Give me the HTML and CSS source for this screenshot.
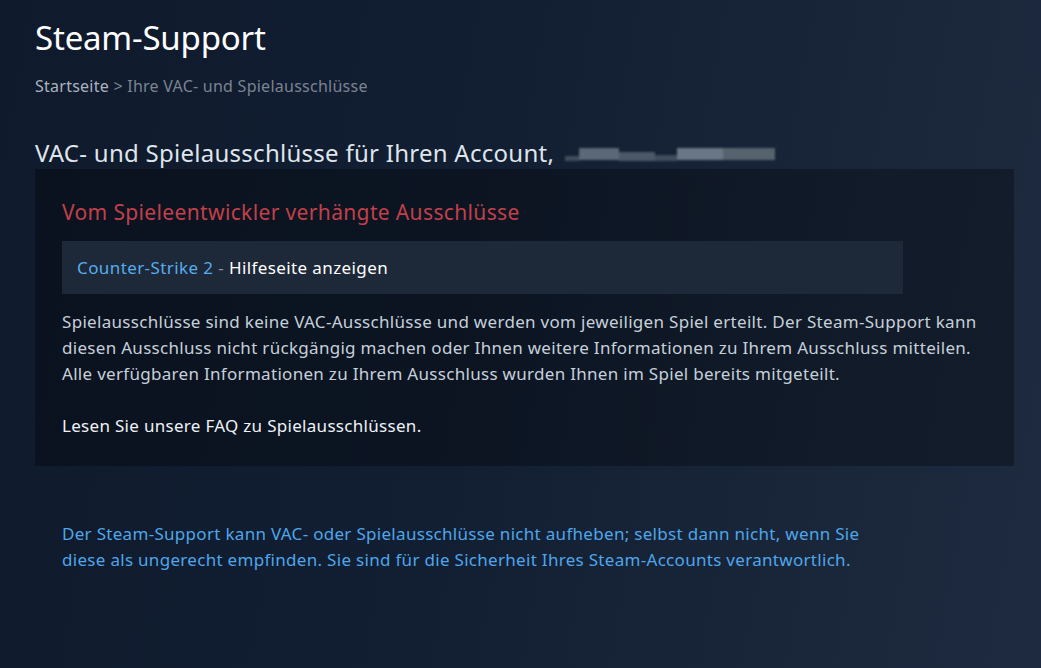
FILE: index.html
```html
<!DOCTYPE html>
<html lang="de">
<head>
<meta charset="utf-8">
<title>Steam-Support</title>
<link rel="stylesheet" href="styles.css">
</head>
<body>
<div class="page">
  <h1 class="title">Steam-Support</h1>
  <div class="crumbs"><a class="crumb-link" href="#">Startseite</a> &gt; Ihre VAC- und Spielausschlüsse</div>
  <h2 class="account">VAC- und Spielausschlüsse für Ihren Account, <span class="blur" aria-hidden="true"><i class="b1"></i><i class="b2"></i><i class="b3"></i><i class="b4"></i><i class="b5"></i><i class="b6"></i></span></h2>
  <section class="box">
    <h3 class="box-title">Vom Spieleentwickler verhängte Ausschlüsse</h3>
    <div class="ban-row"><a class="game" href="#">Counter-Strike 2</a> <span class="sep">-</span> <a class="help" href="#">Hilfeseite anzeigen</a></div>
    <p class="desc">Spielausschlüsse sind keine VAC-Ausschlüsse und werden vom jeweiligen Spiel erteilt. Der Steam-Support kann diesen Ausschluss nicht rückgängig machen oder Ihnen weitere Informationen zu Ihrem Ausschluss mitteilen. Alle verfügbaren Informationen zu Ihrem Ausschluss wurden Ihnen im Spiel bereits mitgeteilt.</p>
    <p class="faq"><a class="faq-link" href="#">Lesen Sie unsere FAQ zu Spielausschlüssen.</a></p>
  </section>
  <p class="note">Der Steam-Support kann VAC- oder Spielausschlüsse nicht aufheben; selbst dann nicht, wenn Sie diese als ungerecht empfinden. Sie sind für die Sicherheit Ihres Steam-Accounts verantwortlich.</p>
</div>
</body>
</html>
```
FILE: styles.css
```css
html, body {
  margin: 0;
  padding: 0;
  height: 100%;
}
body {
  background: linear-gradient(100deg, #0f1a2c 0%, #121e32 45%, #1a273b 80%, #1d2a3f 100%);
  font-family: "Noto Sans", "Open Sans", sans-serif;
  color: #c6d4df;
  overflow: hidden;
}
a { text-decoration: none; }
.page {
  padding: 18px 27px 0 35px;
}
.title {
  margin: 0;
  font-size: 33px;
  line-height: 40px;
  font-weight: 400;
  letter-spacing: -0.2px;
  color: #ffffff;
}
.crumbs {
  margin-top: 18px;
  font-size: 16px;
  line-height: 20px;
  letter-spacing: 0.25px;
  color: #7a8491;
}
.crumb-link { color: #a9b3be; }
.account {
  margin: 42px 0 1px;
  font-size: 24px;
  line-height: 30px;
  font-weight: 400;
  letter-spacing: 0.27px;
  color: #dfe5eb;
  display: flex;
  align-items: center;
  gap: 11px;
}
.blur {
  display: inline-flex;
  align-items: center;
  height: 20px;
  margin-top: 2px;
  filter: blur(1.2px);
}
.blur i { display: block; height: 12px; }
.blur .b1 { width: 14px; height: 5px; margin-top: 8px; background: #3e4c5c; }
.blur .b2 { width: 40px; background: #5a6878; }
.blur .b3 { width: 36px; background: #4a5868; height: 9px; margin-top: 4px; }
.blur .b4 { width: 22px; background: #3f4d5d; height: 6px; margin-top: 8px; }
.blur .b5 { width: 46px; background: #6a7786; }
.blur .b6 { width: 52px; background: #56636f; }
.box {
  background: rgba(0, 0, 0, 0.3);
  padding: 29px 27px 27px;
}
.box-title {
  margin: 0;
  font-size: 21px;
  line-height: 28px;
  font-weight: 400;
  letter-spacing: 0.36px;
  color: #c1404a;
}
.ban-row {
  margin-top: 15px;
  max-width: 841px;
  box-sizing: border-box;
  background: #1d2838;
  padding: 15px 15px 14px;
  font-size: 17px;
  line-height: 24px;
  letter-spacing: 0.4px;
  color: #acb8c4;
}
.game { color: #57acec; }
.sep { color: #8a9aab; }
.help { color: #ffffff; }
.desc {
  margin: 15px 0 0;
  font-size: 17px;
  line-height: 26px;
  letter-spacing: 0.3px;
  color: #c6d0da;
}
.faq {
  margin: 26px 0 0;
  font-size: 17px;
  line-height: 26px;
  letter-spacing: 0.3px;
}
.faq-link { color: #eef2f6; }
.note {
  margin: 55px 0 0;
  padding-left: 27px;
  max-width: 830px;
  font-size: 17px;
  line-height: 26px;
  letter-spacing: 0.3px;
  color: #4fa6ea;
}
```
